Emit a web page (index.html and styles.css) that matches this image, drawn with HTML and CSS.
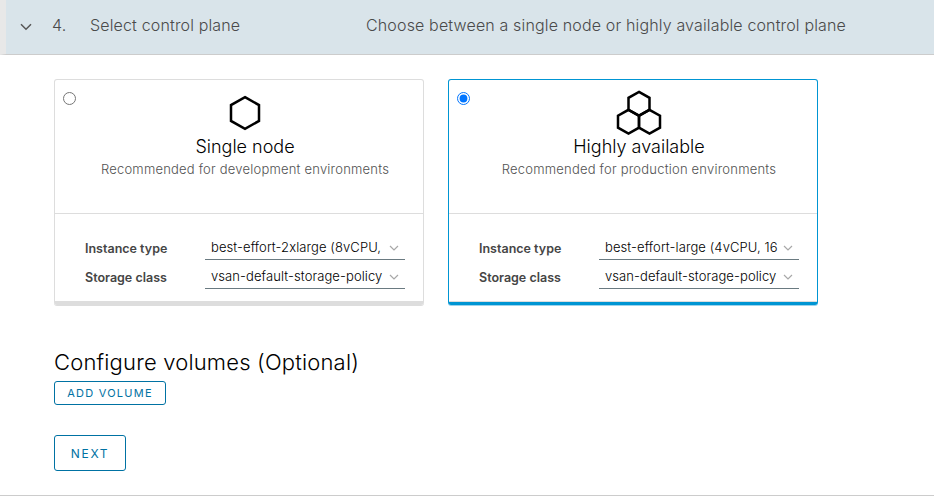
FILE: index.html
```html
<!DOCTYPE html>
<html lang="en">
<head>
<meta charset="utf-8">
<title>Select control plane</title>
<link rel="stylesheet" href="styles.css">
</head>
<body>
<header class="step">
  <svg class="step-caret" viewBox="0 0 12 8"><path d="M1 1.2 6 6.2 11 1.2"/></svg>
  <span class="step-number">4.</span>
  <span class="step-title">Select control plane</span>
  <span class="step-description">Choose between a single node or highly available control plane</span>
</header>
<main class="content">
  <div class="cards">
    <section class="card">
      <label class="card-head">
        <input class="radio" type="radio" name="plane">
        <svg class="node-icon" viewBox="0 0 48 48"><path d="M24 8.2 38 16.1V31.9L24 39.8 10 31.9V16.1Z"/></svg>
        <span class="card-title">Single node</span>
        <span class="card-note">Recommended for development environments</span>
      </label>
      <div class="card-fields">
        <span class="label">Instance type</span>
        <span class="select"><span class="value">best-effort-2xlarge (8vCPU,</span><svg class="caret" viewBox="0 0 10 6"><path d="M1 1 5 5 9 1"/></svg></span>
        <span class="label">Storage class</span>
        <span class="select"><span class="value">vsan-default-storage-policy</span><svg class="caret" viewBox="0 0 10 6"><path d="M1 1 5 5 9 1"/></svg></span>
      </div>
    </section>
    <section class="card selected">
      <label class="card-head">
        <input class="radio" type="radio" name="plane" checked>
        <svg class="node-icon" viewBox="0 0 48 48"><path d="M24 2.9 34.5 8.8V20.8L24 26.7 13.5 20.8V8.8Z"/><path d="M13.5 20.8 24 26.7V38.7L13.5 44.6 3 38.7V26.7Z"/><path d="M34.5 20.8 45 26.7V38.7L34.5 44.6 24 38.7V26.7Z"/></svg>
        <span class="card-title">Highly available</span>
        <span class="card-note">Recommended for production environments</span>
      </label>
      <div class="card-fields">
        <span class="label">Instance type</span>
        <span class="select"><span class="value">best-effort-large (4vCPU, 16</span><svg class="caret" viewBox="0 0 10 6"><path d="M1 1 5 5 9 1"/></svg></span>
        <span class="label">Storage class</span>
        <span class="select"><span class="value">vsan-default-storage-policy</span><svg class="caret" viewBox="0 0 10 6"><path d="M1 1 5 5 9 1"/></svg></span>
      </div>
    </section>
  </div>
  <h2 class="volumes-title">Configure volumes (Optional)</h2>
  <button class="button button-small">ADD VOLUME</button>
  <button class="button button-next">NEXT</button>
</main>
</body>
</html>
```
FILE: styles.css
```css
* { box-sizing: border-box; }

body {
  margin: 0;
  height: 496px;
  overflow: hidden;
  background: #fff;
  color: #000;
  font-family: Inter, "Open Sans", sans-serif;
}

.step {
  display: grid;
  grid-template-columns: 32px 38px 276px 1fr;
  align-items: center;
  height: 55px;
  padding: 0 0 5px 14px;
  border-bottom: 1px solid #ccc;
  border-left: 6px solid #e8e8e8;
  background: #d9e4ea;
  color: #4a4a4a;
  font-size: 16px;
  line-height: 24px;
  font-weight: 300;
  letter-spacing: 0.15px;
  white-space: nowrap;
}

.step-caret {
  width: 12px;
  height: 8px;
  margin-top: 4px;
  fill: none;
  stroke: #565656;
  stroke-width: 1.5;
}

.content {
  display: flex;
  flex-direction: column;
  align-items: flex-start;
  height: 441px;
  padding: 24px 0 0 54px;
  border-bottom: 1px solid #ccc;
}

.cards { display: flex; gap: 24px; }

.card {
  width: 370px;
  height: 226px;
  border: 1px solid #ddd;
  border-bottom-width: 4px;
  border-radius: 3px;
  box-shadow: 0 1px 0 #ddd;
}

.selected {
  border-color: #0095d3;
  border-bottom-width: 3px;
  box-shadow: inset 0 -1px 0 #ddd, 0 1px 0 #9dd3ec;
}

.card-head {
  position: relative;
  display: flex;
  flex-direction: column;
  align-items: center;
  height: 134px;
  padding: 9px 0 0 12px;
  border-bottom: 1px solid #ddd;
}

.radio {
  position: absolute;
  left: 8px;
  top: 12px;
  width: 13px;
  height: 13px;
  margin: 0;
}

.node-icon {
  width: 48px;
  height: 48px;
  fill: none;
  stroke: #000;
  stroke-width: 2.5;
}

.card-title { margin-top: -2px; font-size: 18px; font-weight: 300; line-height: 24px; }

.card-note {
  margin-top: 1px;
  color: #525252;
  font-size: 13px;
  font-weight: 300;
  line-height: 18px;
  letter-spacing: 0.21px;
  white-space: nowrap;
}

.card-fields {
  display: grid;
  grid-template-columns: 120px 200px;
  grid-template-rows: 24px 24px;
  row-gap: 5px;
  padding: 22px 0 0 30px;
}

.label { color: #454545; font-size: 12.5px; font-weight: 600; line-height: 25px; }

.select {
  display: flex;
  align-items: center;
  justify-content: space-between;
  border-bottom: 1px solid #6a7a81;
  padding: 0 6px;
  font-size: 13px;
  font-weight: 300;
  letter-spacing: 0.09px;
}

.value { margin-top: -2px; white-space: nowrap; }

.caret { width: 10px; height: 6px; fill: none; stroke: #a8a8a8; stroke-width: 1.2; }

.volumes-title {
  margin: 43px 0 0;
  font-size: 22px;
  font-weight: 300;
  line-height: 28px;
  letter-spacing: 0.18px;
}

.button {
  border: 1px solid #0072a3;
  border-radius: 3px;
  background: #fff;
  color: #0072a3;
  font-family: inherit;
  padding: 0;
}

.button-small { width: 112px; height: 24px; margin-top: 5px; font-size: 11px; letter-spacing: 1.25px; }

.button-next { width: 72px; height: 36px; margin-top: 30px; font-size: 12px; letter-spacing: 1.7px; }
```
